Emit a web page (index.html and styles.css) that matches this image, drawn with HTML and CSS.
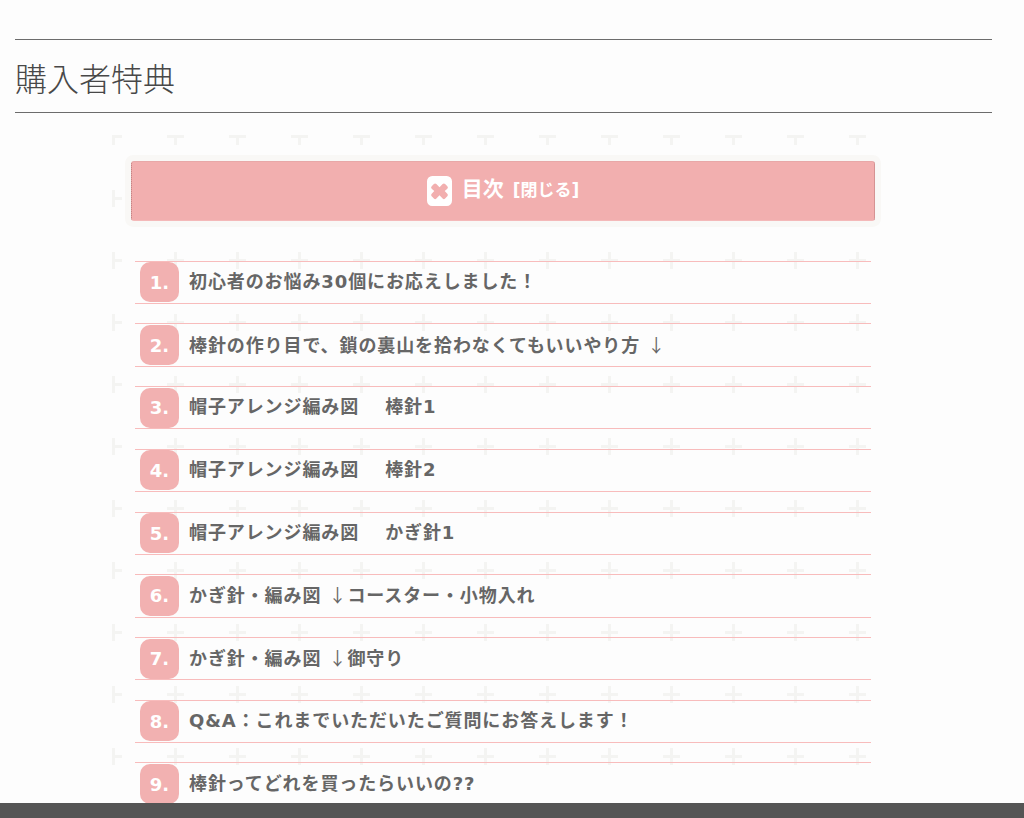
FILE: index.html
```html
<!DOCTYPE html>
<html lang="ja">
<head>
<meta charset="utf-8">
<title>購入者特典</title>
<link rel="stylesheet" href="styles.css">
</head>
<body>
<main class="page">
  <h2 class="title">購入者特典</h2>
  <section class="toc">
    <div class="toc-head">
      <svg class="toc-icon" viewBox="0 0 24 28" preserveAspectRatio="none" aria-hidden="true"><path fill-rule="evenodd" fill="#fff" d="M5 0h14a5 5 0 0 1 5 5v18a5 5 0 0 1-5 5H5a5 5 0 0 1-5-5V5a5 5 0 0 1 5-5zM12 10.500 9 7.500a1.700 1.700 0 0 0-2.400 0L4.500 9.600a1.700 1.700 0 0 0 0 2.400l2.500 2-2.500 2.500a1.700 1.700 0 0 0 0 2.400l2.100 2.100a1.700 1.700 0 0 0 2.400 0l3-3 3 3a1.700 1.700 0 0 0 2.400 0l2.100-2.100a1.700 1.700 0 0 0 0-2.400L17 14l2.500-2a1.700 1.700 0 0 0 0-2.400l-2.100-2.100a1.700 1.700 0 0 0-2.400 0z"/></svg>
      <span class="toc-title">目次</span>
      <span class="toc-toggle">[閉じる]</span>
    </div>
    <ol class="toc-list">
      <li class="toc-item"><span class="num">1.</span><span class="label">初心者のお悩み30個にお応えしました！</span></li>
      <li class="toc-item"><span class="num">2.</span><span class="label">棒針の作り目で、鎖の裏山を拾わなくてもいいやり方 <span class="arrow">↓</span></span></li>
      <li class="toc-item"><span class="num">3.</span><span class="label">帽子アレンジ編み図　 棒針1</span></li>
      <li class="toc-item"><span class="num">4.</span><span class="label">帽子アレンジ編み図　 棒針2</span></li>
      <li class="toc-item"><span class="num">5.</span><span class="label">帽子アレンジ編み図　 かぎ針1</span></li>
      <li class="toc-item"><span class="num">6.</span><span class="label">かぎ針・編み図 <span class="arrow">↓</span>コースター・小物入れ</span></li>
      <li class="toc-item"><span class="num">7.</span><span class="label">かぎ針・編み図 <span class="arrow">↓</span>御守り</span></li>
      <li class="toc-item"><span class="num">8.</span><span class="label">Q&amp;A：これまでいただいたご質問にお答えします！</span></li>
      <li class="toc-item"><span class="num">9.</span><span class="label">棒針ってどれを買ったらいいの??</span></li>
    </ol>
  </section>
</main>
<footer class="bottom-bar"></footer>
</body>
</html>
```
FILE: styles.css
```css
html, body { margin: 0; padding: 0; height: 818px; overflow: hidden; }
body { background: #fdfdfd; color: #666; font-family: "DejaVu Sans", "Noto Sans CJK JP", sans-serif; position: relative; }
.page { padding: 39px 32px 0 15px; }
.title {
  margin: 0; height: 72px; line-height: 74px;
  border-top: 1px solid #6c6c6c; border-bottom: 1px solid #6c6c6c;
  font-family: "Noto Sans CJK JP", sans-serif; font-size: 32px; font-weight: 300; color: #484848;
}
.toc {
  margin: 22px 98px 0 97px; padding: 26px 23px 0;
  height: 640px;
  background-color: #fdfdfd;
  background-image: url("data:image/svg+xml,%3Csvg xmlns='http://www.w3.org/2000/svg' width='62' height='62'%3E%3Cpath fill='%23f4f4f2' d='M30 23h3v7h7v3h-7v7h-3v-7h-7v-3h7z'/%3E%3C/svg%3E");
  background-position: -30px -30px;
}
.toc-head {
  margin: 0 -4px 39.600px; height: 60px; box-sizing: border-box;
  display: flex; align-items: center; justify-content: center;
  background: #f2afaf; color: #fff;
  border-left: 1px dotted #b87878; border-right: 1px dotted #b87878;
  border-top: 1px solid #e8a8a8; border-bottom: 1px solid #f4b9b9;
  box-shadow: 0 0 0 6px #f9f8f6;
  border-radius: 3px;
}
.toc-icon { width: 25px; height: 30px; margin-right: 10px; margin-bottom: 1px; }
.toc-title { font-size: 21px; font-weight: 700; margin-right: 9px; line-height: 1; padding-bottom: 4px; }
.toc-toggle { font-size: 17px; font-weight: 700; line-height: 1; padding-bottom: 1px; }
.toc-list { list-style: none; margin: 0; padding: 0; }
.toc-item {
  box-sizing: border-box; height: 43.400px; margin-bottom: 19.350px;
  display: flex; align-items: center; padding-left: 5px;
  border-top: 1px solid #f8bcbc; border-bottom: 1px solid #f8bcbc;
}
.num {
  flex: none; width: 39px; height: 40px; box-sizing: border-box; padding-top: 1px; margin-right: 10px; border-radius: 10px;
  background: #f2b1b1; color: #fff; font-size: 18px; font-weight: 700; line-height: 1;
  display: flex; align-items: center; justify-content: center;
}
.label { font-size: 18px; font-weight: 700; letter-spacing: 0.900px; color: #666; white-space: pre; line-height: 1; padding-bottom: 1px; }
.arrow { font-family: "Noto Sans CJK JP", sans-serif; font-weight: 400; }
.bottom-bar { position: absolute; left: 0; right: 0; bottom: 0; height: 15px; background: #555; }
```
